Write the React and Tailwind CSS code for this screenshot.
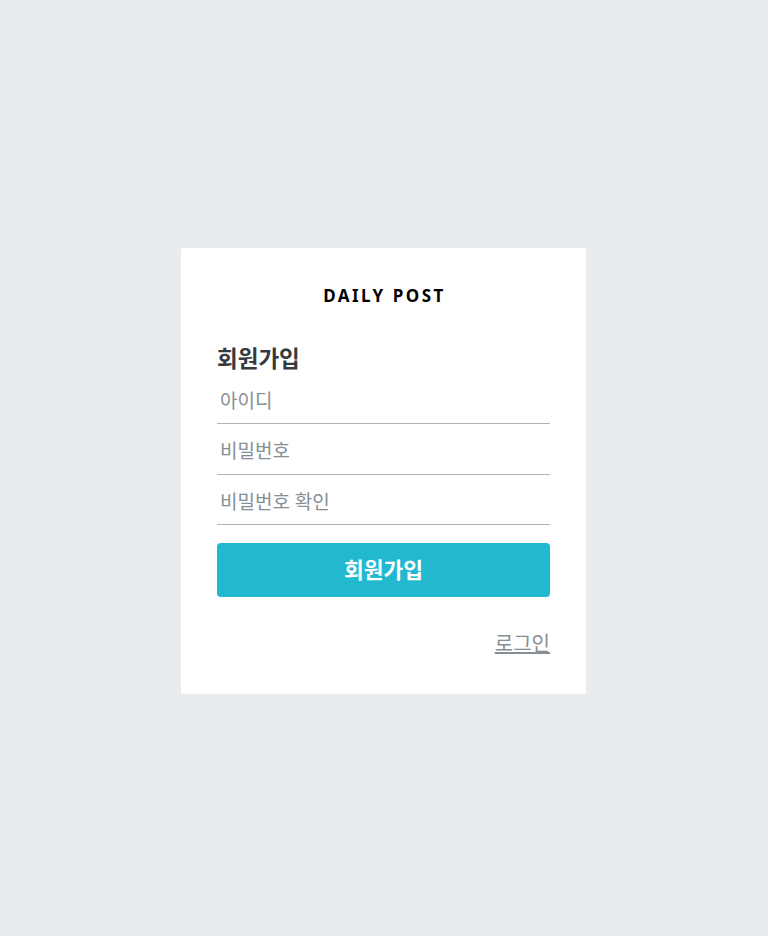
export default function App() {
  const font = { fontFamily: '"Noto Sans", "Noto Sans CJK KR", sans-serif' };
  const inputCls =
    "pt-[4px] px-[3px] text-[19px] border-b border-[#adb5bd] outline-none placeholder:text-[#868e96] text-[#343a40]";
  return (
    <div
      className="min-h-screen w-full bg-[#e9ecef] flex items-center justify-center pt-[6px] pr-[1px]"
      style={font}
    >
      <div className="w-[405px] bg-white rounded-[2px] px-[36px] pt-[36px] pb-[35px]">
        <div className="h-[24px] flex items-center justify-center pl-[2px] text-[17px] font-bold tracking-[2.5px] text-black">
          DAILY POST
        </div>
        <h3 className="mt-[36px] h-[30px] flex items-center text-[22.5px] font-bold text-[#343a40]">
          회원가입
        </h3>
        <form className="flex flex-col" onSubmit={(e) => e.preventDefault()}>
          <input className={"h-[50px] " + inputCls} placeholder="아이디" />
          <input
            className={"h-[51px] " + inputCls}
            placeholder="비밀번호"
            type="password"
          />
          <input
            className={"h-[50px] " + inputCls}
            placeholder="비밀번호 확인"
            type="password"
          />
          <button className="mt-[18px] h-[54px] rounded-[4px] bg-[#22b8cf] text-white text-[21.5px] font-bold">
            회원가입
          </button>
        </form>
        <div className="mt-[32px] h-[30px] flex items-center justify-end">
          <a href="#" className="text-[20px] leading-[30px] text-[#868e96] underline">
            로그인
          </a>
        </div>
      </div>
    </div>
  );
}
